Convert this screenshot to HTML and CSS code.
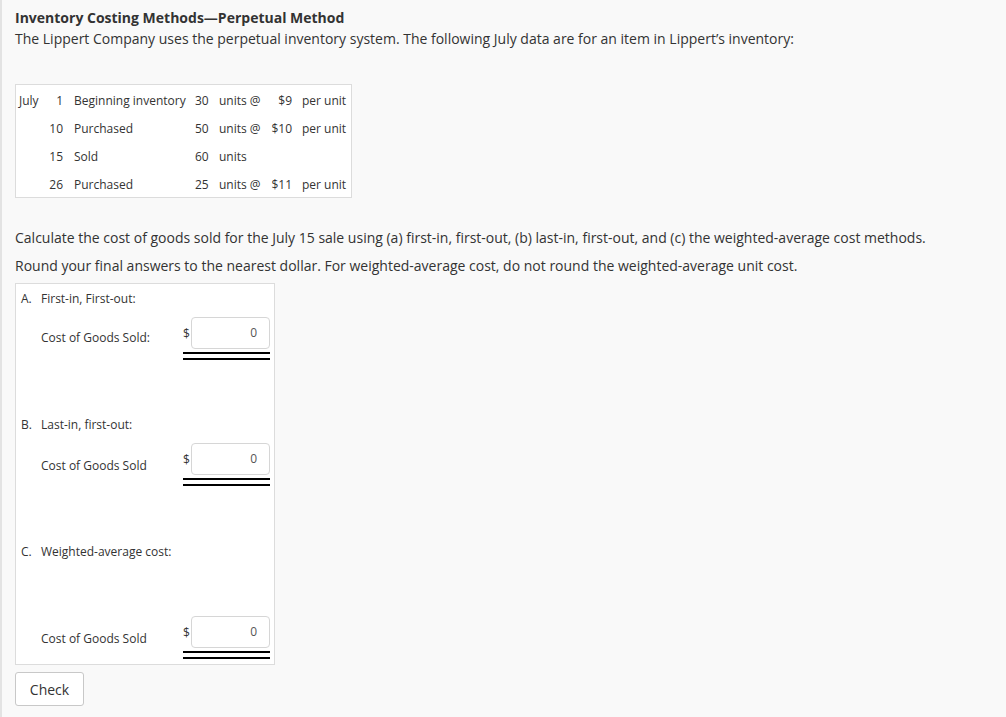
FILE: index.html
```html
<!DOCTYPE html>
<html>
<head>
<meta charset="utf-8">
<link rel="stylesheet" href="styles.css">
</head>
<body>
<div class="page">
  <h1 class="title">Inventory Costing Methods—Perpetual Method</h1>
  <p class="intro">The Lippert Company uses the perpetual inventory system. The following July data are for an item in Lippert’s inventory:</p>

  <div class="data">
    <span>July</span><span class="r">1</span><span class="desc">Beginning inventory</span><span>30</span><span>units @</span><span class="r">$9</span><span class="per">per unit</span>
    <span></span><span class="r">10</span><span class="desc">Purchased</span><span>50</span><span>units @</span><span class="r">$10</span><span class="per">per unit</span>
    <span></span><span class="r">15</span><span class="desc">Sold</span><span>60</span><span>units</span><span class="r"></span><span class="per"></span>
    <span></span><span class="r">26</span><span class="desc">Purchased</span><span>25</span><span>units @</span><span class="r">$11</span><span class="per">per unit</span>
  </div>

  <div class="instructions">
    <p>Calculate the cost of goods sold for the July 15 sale using (a) first-in, first-out, (b) last-in, first-out, and (c) the weighted-average cost methods.</p>
    <p>Round your final answers to the nearest dollar. For weighted-average cost, do not round the weighted-average unit cost.</p>
  </div>

  <div class="answers">
    <div class="section">
      <div class="head"><span class="letter">A.</span><span>First-in, First-out:</span></div>
      <div class="row">
        <span class="label">Cost of Goods Sold:</span>
        <div class="field">
          <div class="inputline"><span class="dollar">$</span><span class="input">0</span></div>
          <div class="dbl"></div>
        </div>
      </div>
    </div>
    <div class="section">
      <div class="head"><span class="letter">B.</span><span>Last-in, first-out:</span></div>
      <div class="row">
        <span class="label lower">Cost of Goods Sold</span>
        <div class="field">
          <div class="inputline"><span class="dollar">$</span><span class="input">0</span></div>
          <div class="dbl"></div>
        </div>
      </div>
    </div>
    <div class="section last">
      <div class="head"><span class="letter">C.</span><span>Weighted-average cost:</span></div>
      <div class="row row-far">
        <span class="label">Cost of Goods Sold</span>
        <div class="field">
          <div class="inputline"><span class="dollar">$</span><span class="input">0</span></div>
          <div class="dbl"></div>
        </div>
      </div>
    </div>
  </div>

  <button class="check">Check</button>
</div>
</body>
</html>
```

FILE: styles.css
```css
html, body {
  margin: 0;
  padding: 0;
  background: #f9f9f9;
  font-family: "Open Sans", "Liberation Sans", sans-serif;
  color: #333;
}
.page {
  border-left: 2px solid #e3e3e3;
  min-height: 717px;
  box-sizing: border-box;
  padding: 7px 0 0 13px;
}
.title {
  font-size: 14px;
  font-weight: 700;
  line-height: 21px;
  margin: 0;
  color: #333;
}
.intro {
  font-size: 14px;
  line-height: 21px;
  margin: 0;
}
.data {
  display: inline-grid;
  grid-template-columns: 25px 19px 132px 24px 47px 26px 59px;
  grid-auto-rows: 28px;
  margin-top: 35px;
  padding: 0 0 0 3px;
  border: 1px solid #dcdcdc;
  background: #fff;
  font-size: 12px;
  white-space: nowrap;
}
.data span {
  padding-top: 4px;
  line-height: 24px;
}
.data .r { text-align: right; }
.data .desc { padding-left: 11px; }
.data .per { padding-left: 10px; }
.instructions {
  margin-top: 26px;
  font-size: 14px;
  line-height: 28px;
}
.instructions p { margin: 0; }
.answers {
  margin-top: 3px;
  width: 260px;
  box-sizing: border-box;
  border: 1px solid #dcdcdc;
  background: #fff;
  padding: 7px 4px 5px 5px;
  font-size: 12px;
  line-height: 16px;
}
.section + .section { margin-top: 57px; }
.section.last { margin-top: 58px; }
.head { display: flex; }
.letter { width: 20px; }
.row {
  display: grid;
  grid-template-columns: 1fr 87px;
  align-items: end;
  margin-top: 10px;
}
.row-far { margin-top: 56px; }
.label {
  padding-left: 20px;
  margin-bottom: 14px;
}
.label.lower { margin-bottom: 12px; }
.row-far .label { margin-bottom: 12px; }
.field { display: flex; flex-direction: column; }
.inputline { display: flex; align-items: center; }
.dollar { width: 8px; margin-top: 1px; }
.input {
  flex: 1;
  height: 32px;
  box-sizing: border-box;
  border: 1px solid #d6d6d6;
  border-radius: 4px;
  text-align: right;
  padding-right: 12px;
  line-height: 30px;
  color: #555;
  background: #fff;
}
.dbl {
  margin-top: 3px;
  height: 4px;
  border-top: 2px solid #000;
  border-bottom: 2px solid #000;
}
.check {
  display: block;
  margin-top: 7px;
  width: 69px;
  height: 34px;
  background: #fff;
  border: 1px solid #c8c8c8;
  border-radius: 3px;
  font-family: "Open Sans", "Liberation Sans", sans-serif;
  font-size: 14px;
  color: #333;
  padding: 0;
}
```
